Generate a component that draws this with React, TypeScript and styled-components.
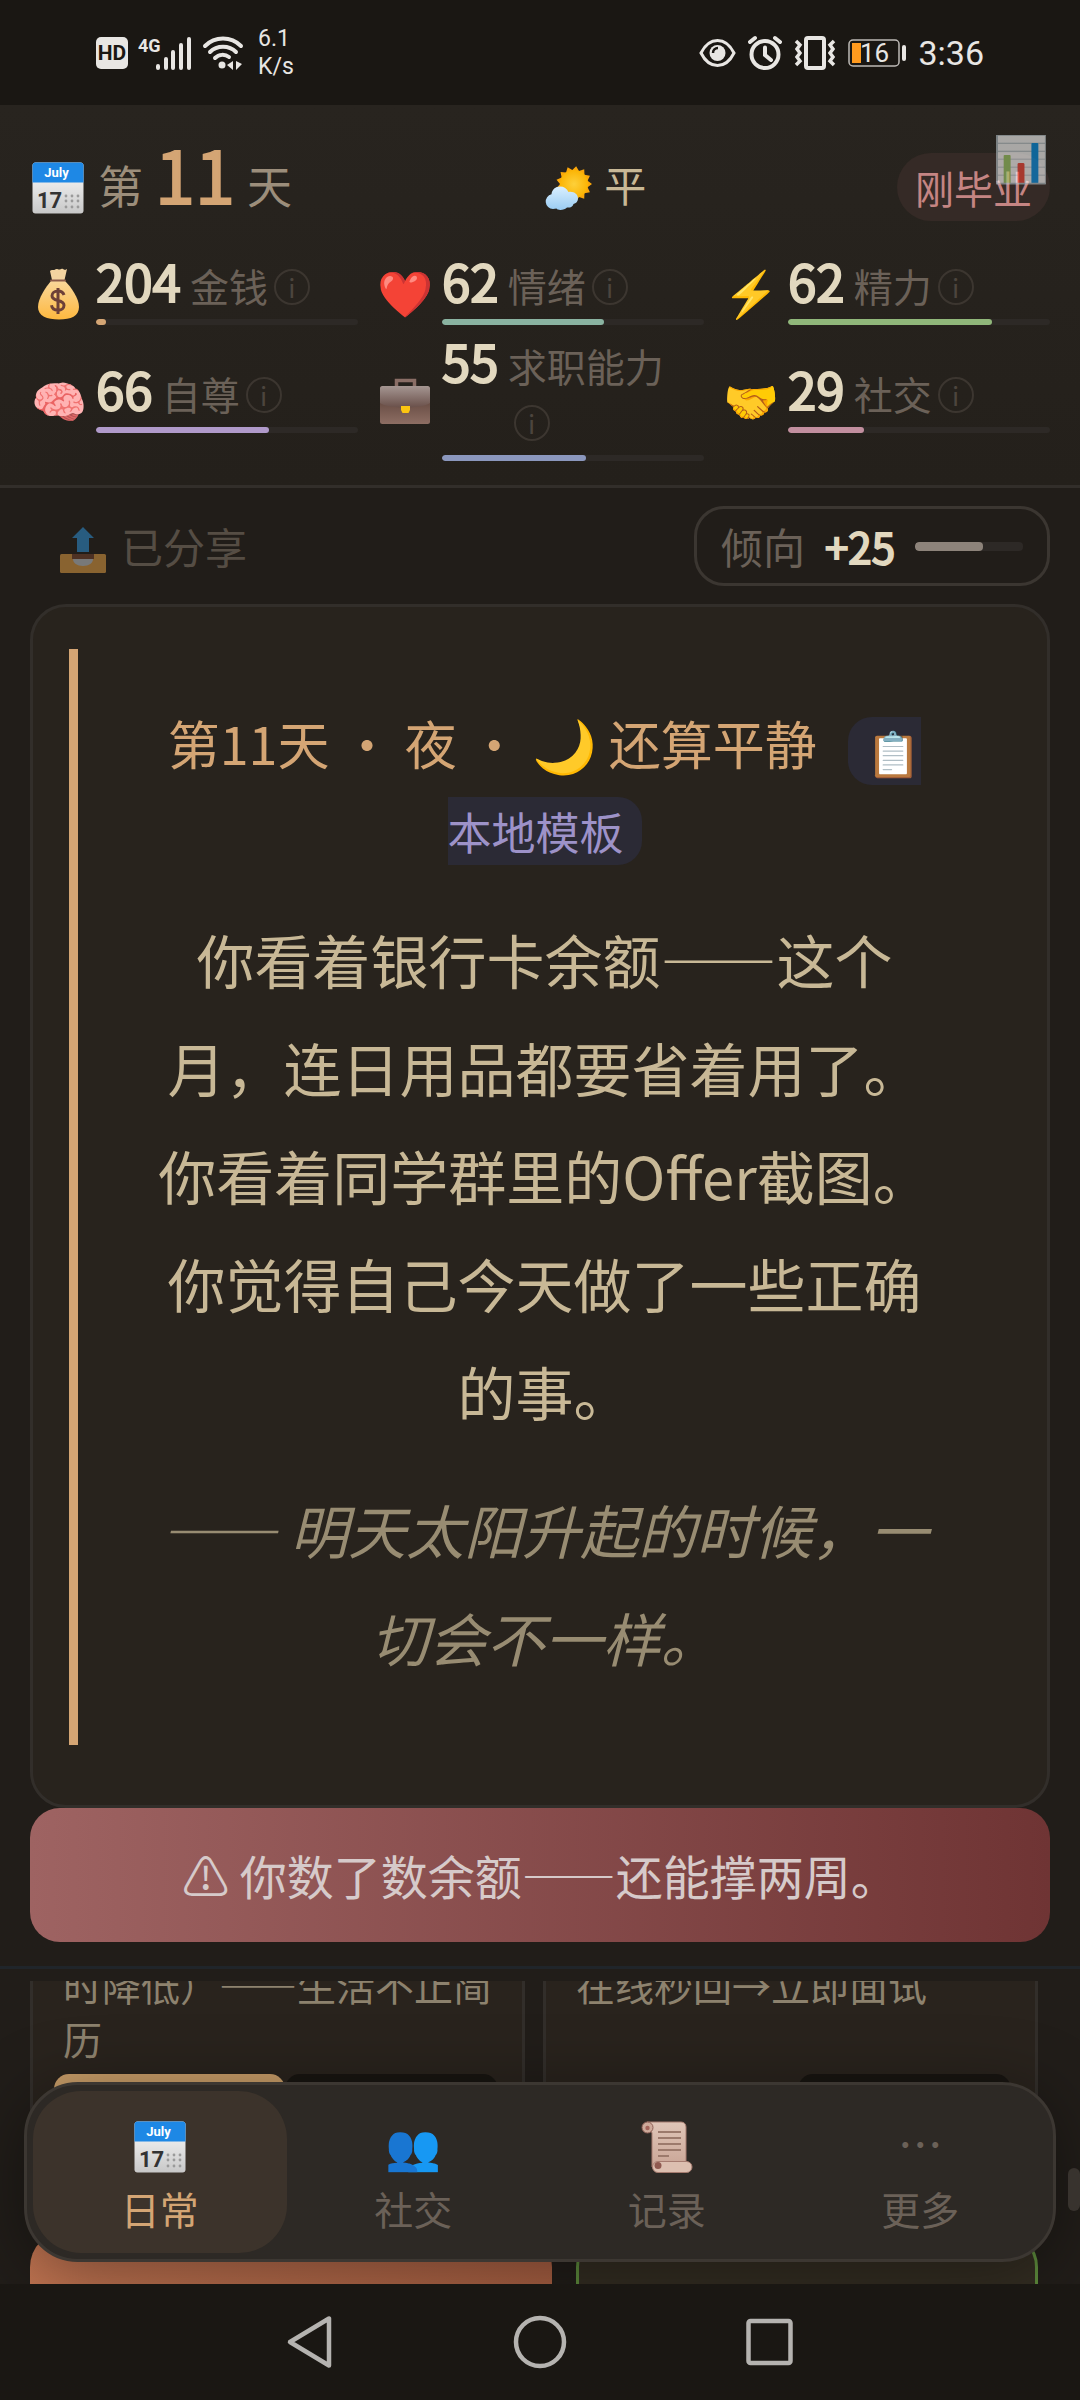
import React, { ReactNode } from 'react';
import styled, { createGlobalStyle } from 'styled-components';

const c = {
  bg: '#211d19',
  system: '#1a1713',
  panel: '#28231d',
  line: '#322e2a',
  gold: '#d4a574',
  text: '#c8b896',
  bright: '#e2d8bf',
  soft: '#9c8e7b',
  muted: '#6b6158',
  white: '#e8e6e3',
};

const GlobalStyle = createGlobalStyle`
  *, *::before, *::after { box-sizing: border-box; }
  body {
    margin: 0;
    background: ${c.bg};
    color: ${c.text};
    font-family: "Noto Sans CJK SC", "Noto Sans", sans-serif;
  }
  button { font: inherit; color: inherit; background: none; border: 0; padding: 0; margin: 0; }
  p, h1, h2 { margin: 0; font-weight: 400; }
`;

const Screen = styled.div`
  display: flex;
  flex-direction: column;
  height: 100vh;
  overflow: hidden;
`;

/* ---------- system status bar ---------- */

const StatusBar = styled.div`
  flex: none;
  height: 105px;
  padding: 0 96px;
  display: flex;
  align-items: center;
  justify-content: space-between;
  background: ${c.system};
  color: ${c.white};
  font-family: Roboto, sans-serif;
`;

const StatusGroup = styled.div<{ $gap: number }>`
  display: flex;
  align-items: center;
  gap: ${p => p.$gap}px;
`;

const HdBadge = styled.span`
  width: 32px;
  height: 32px;
  border-radius: 5px;
  background: ${c.white};
  color: ${c.system};
  font-size: 21px;
  font-weight: 700;
  line-height: 32px;
  text-align: center;
`;

const Speed = styled.span`
  padding-left: 4px;
  font-size: 23px;
  line-height: 28px;
`;

const Clock = styled.span`
  font-size: 34px;
  line-height: 40px;
`;

/* ---------- header ---------- */

const Header = styled.header`
  position: relative;
  flex: none;
  padding: 36px 30px 24px;
  display: flex;
  flex-direction: column;
  gap: 24px;
  background: linear-gradient(#28241f, #24201b);
  border-bottom: 3px solid ${c.line};
`;

const DayRow = styled.div`
  height: 92px;
  display: flex;
  align-items: center;
  justify-content: space-between;
`;

const Day = styled.h1`
  padding-bottom: 9px;
  display: flex;
  align-items: baseline;
  gap: 12px;
  font-size: 45px;
  line-height: 60px;
  color: ${c.soft};
  white-space: nowrap;
`;

const Figure = styled.span<{ $size: number }>`
  font-size: ${p => p.$size}px;
  line-height: 44px;
  -webkit-text-stroke: 2px currentColor;
`;

const DayNumber = styled(Figure)`
  color: ${c.gold};
`;

const Weather = styled.p`
  padding-bottom: 6px;
  font-size: 42px;
  line-height: 60px;
  white-space: nowrap;
`;

const StageTag = styled.span`
  padding: 0 18px;
  border-radius: 34px;
  background: #352a26;
  color: #c58583;
  font-size: 39px;
  line-height: 68px;
`;

const ChartButton = styled.button`
  position: absolute;
  top: 21px;
  right: 31px;
  font-size: 45px;
  line-height: 60px;
  opacity: 0.6;
`;

const Stats = styled.div`
  display: grid;
  grid-template-columns: repeat(3, minmax(0, 1fr));
  gap: 12px 18px;
`;

const Stat = styled.div`
  display: flex;
  align-items: center;
  gap: 9px;
`;

const Icon = styled.span<{ $line?: number }>`
  flex: none;
  width: 57px;
  font-size: 45px;
  line-height: ${p => p.$line ?? 56}px;
  text-align: center;
  white-space: nowrap;
`;

const StatBody = styled.div`
  flex: 1;
  min-width: 0;
`;

const StatLine = styled.div`
  display: flex;
  align-items: baseline;
  gap: 9px;
  color: ${c.bright};
`;

const StatLabel = styled.span`
  font-size: 39px;
  line-height: 56px;
  color: ${c.muted};
`;

const InfoButton = styled.button`
  width: 36px;
  height: 36px;
  margin-left: 6px;
  border: 2px solid #3c3630;
  border-radius: 50%;
  color: #4c453e;
  font-size: 26px;
  line-height: 32px;
  vertical-align: 4px;
`;

const Track = styled.div<{ $h: number; $top?: number }>`
  height: ${p => p.$h}px;
  margin-top: ${p => p.$top ?? 0}px;
  border-radius: 4px;
  background: #2d2926;
  overflow: hidden;
`;

const Fill = styled.div<{ $color: string }>`
  height: 100%;
  border-radius: 4px;
  background: ${p => p.$color};
`;

/* ---------- story ---------- */

const Toolbar = styled.div`
  flex: none;
  padding: 18px 30px;
  display: flex;
  align-items: center;
  justify-content: space-between;
`;

const ShareButton = styled.button`
  padding: 0 27px;
  display: flex;
  align-items: baseline;
  gap: 12px;
  font-size: 42px;
  line-height: 60px;
  color: #8a7e70;
  opacity: 0.5;
`;

const Tendency = styled.div`
  height: 80px;
  padding: 0 24px;
  display: flex;
  align-items: center;
  gap: 20px;
  border: 3px solid #3b3631;
  border-radius: 30px;
  font-size: 42px;
  line-height: 60px;
  color: ${c.muted};
`;

const TendencyValue = styled(Figure)`
  color: ${c.bright};
`;

const TendencyBar = styled.div`
  width: 108px;
`;

const StoryCard = styled.section`
  flex: none;
  margin: 0 30px;
  padding: 42px 36px 60px;
  border: 3px solid ${c.line};
  border-radius: 36px;
  background: ${c.panel};
`;

const StoryBody = styled.div`
  padding: 54px 72px;
  border-left: 9px solid ${c.gold};
  text-align: center;
`;

const StoryTitle = styled.h2`
  margin-bottom: 42px;
  font-size: 52px;
  line-height: 80px;
  color: ${c.gold};
`;

const SourceBadge = styled.span`
  margin-left: 20px;
  padding: 2px 18px;
  border-radius: 24px;
  background: #2b2a35;
  color: #9d92c8;
  font-size: 44px;
  line-height: 60px;
  vertical-align: middle;
`;

const StoryText = styled.p`
  font-size: 58px;
  line-height: 108px;
`;

const StoryQuote = styled(StoryText)`
  margin-top: 30px;
  color: #988c72;
  font-style: italic;
`;

const Alert = styled.div`
  flex: none;
  margin: 0 30px 24px;
  padding: 32px 24px;
  border-radius: 30px;
  background: linear-gradient(90deg, #9e6362, #6f3434);
  color: #d6caca;
  font-size: 47px;
  line-height: 70px;
  text-align: center;
`;

const Divider = styled.hr`
  flex: none;
  width: 100%;
  height: 3px;
  margin: 0 0 12px;
  border: 0;
  background: #20252a;
`;

/* ---------- action list ---------- */

const Actions = styled.main`
  position: relative;
  flex: 1;
  min-height: 0;
  overflow: hidden;
`;

const ActionList = styled.div`
  margin-top: -24px;
  padding: 0 42px 0 30px;
  display: flex;
  flex-direction: column;
  gap: 24px;
`;

const CardGrid = styled.div`
  display: grid;
  grid-template-columns: repeat(2, minmax(0, 1fr));
  gap: 18px;
`;

const ActionCard = styled.article`
  padding: 0 21px 24px;
  border: 3px solid ${c.line};
  border-top: 0;
  border-radius: 0 0 30px 30px;
  background: #29231d;
  display: flex;
  flex-direction: column;
  justify-content: space-between;
  gap: 9px;
`;

const ActionText = styled.p`
  padding: 0 0 0 9px;
  font-size: 39px;
  line-height: 54px;
  color: #8d826e;
`;

const CardButtons = styled.div`
  display: flex;
  justify-content: flex-end;
  padding-right: 3px;
`;

const CardButton = styled.button<{ $gold?: boolean }>`
  flex: ${p => (p.$gold ? '0 0 52%' : '0 0 48%')};
  height: 106px;
  border-radius: 15px;
  background: ${p => (p.$gold ? '#c89d68' : '#181511')};
`;

const WideRow = styled.div`
  display: flex;
  gap: 24px;
`;

const WideButton = styled.button<{ $grow: number; $green?: boolean }>`
  flex: ${p => p.$grow} 1 0;
  height: 120px;
  border-radius: 36px;
  border: 3px solid ${p => (p.$green ? '#5d8a3c' : 'transparent')};
  background: ${p => (p.$green ? '#332d22' : 'linear-gradient(100deg, #c27552, #a85f42) border-box')};
`;

const ScrollThumb = styled.span`
  position: absolute;
  right: 0;
  bottom: 73px;
  width: 12px;
  height: 43px;
  border-radius: 6px;
  background: #38332e;
`;

const TabBar = styled.nav`
  position: absolute;
  left: 24px;
  right: 24px;
  bottom: 22px;
  padding: 6px;
  display: grid;
  grid-template-columns: repeat(4, minmax(0, 1fr));
  border: 3px solid #3c3732;
  border-radius: 54px;
  background: #2d2925;
  box-shadow: 0 12px 72px rgba(0, 0, 0, 0.4);
`;

const Tab = styled.button<{ $active?: boolean }>`
  padding: 17px 0;
  display: flex;
  flex-direction: column;
  align-items: center;
  border-radius: 48px;
  background: ${p => (p.$active ? '#3c332b' : 'transparent')};
  color: ${p => (p.$active ? c.gold : c.muted)};
`;

const TabLabel = styled.span`
  font-size: 39px;
  line-height: 56px;
`;

/* ---------- system navigation ---------- */

const SystemNav = styled.div`
  flex: none;
  height: 116px;
  display: flex;
  align-items: center;
  justify-content: center;
  gap: 174px;
  background: ${c.system};
`;

const SystemButton = styled.button`
  width: 56px;
  height: 56px;
  color: #b5b3b0;
`;

/* ---------- drawings ---------- */

const Picture = styled.svg<{ $size: number }>`
  width: ${p => p.$size}px;
  height: ${p => p.$size}px;
  margin: 0 2px;
  vertical-align: -10px;
`;

const Calendar = () => (
  <Picture $size={52} viewBox="0 0 52 52" aria-hidden="true">
    <defs>
      <linearGradient id="page" x1="0" y1="0" x2="0" y2="1">
        <stop offset="0" stopColor="#fff" />
        <stop offset="1" stopColor="#c8c8c8" />
      </linearGradient>
    </defs>
    <rect x="0.5" y="0.5" width="51" height="51" rx="3" fill="url(#page)" />
    <path d="M0.5 20.5V3.5a3 3 0 0 1 3-3h45a3 3 0 0 1 3 3v17z" fill="#1e88e5" />
    <text x="24.5" y="15" fontFamily="Roboto" fontSize="13" fontWeight="700" fill="#fff" textAnchor="middle">July</text>
    <text x="5" y="46" fontFamily="Roboto" fontSize="22" fontWeight="700" fill="#333">17</text>
    {[34, 40, 46].map(x => [34, 39, 45].map(y => <circle key={`${x}${y}`} cx={x} cy={y} r="1.4" fill="#9a9a9a" />))}
  </Picture>
);

const rays = Array.from({ length: 26 }, (_, i) => {
  const r = i % 2 ? 14 : 18;
  const a = (i / 26) * Math.PI * 2;
  return `${29 + r * Math.cos(a)},${20 + r * Math.sin(a)}`;
}).join(' ');

const SunCloud = () => (
  <Picture $size={48} viewBox="0 0 48 48" aria-hidden="true">
    <defs>
      <radialGradient id="sun">
        <stop offset="0" stopColor="#fdd03a" />
        <stop offset="1" stopColor="#fbb404" />
      </radialGradient>
      <linearGradient id="cloud" x1="0" y1="0" x2="0" y2="1">
        <stop offset="0" stopColor="#d9efff" />
        <stop offset="1" stopColor="#9accf3" />
      </linearGradient>
    </defs>
    <polygon points={rays} fill="#fba70a" />
    <circle cx="29" cy="20" r="14" fill="url(#sun)" />
    <path d="M8 45a7.500 7.500 0 0 1-1.500-14.800C7 25.500 10.500 22.500 15 22.500c4 0 7 2 8.500 5.500 5-1 9.500 2 9.500 6.500 0 3-2 5-4.500 5.500C27.500 43 25 44 22 43.500 20 46 13 47 11.500 44.500z" fill="url(#cloud)" />
  </Picture>
);

const MoneyBag = () => (
  <Picture $size={52} viewBox="0 0 52 52" aria-hidden="true">
    <defs>
      <linearGradient id="bag" x1="0" y1="0" x2="0" y2="1">
        <stop offset="0" stopColor="#f9d79a" />
        <stop offset="1" stopColor="#fdb83f" />
      </linearGradient>
    </defs>
    <path d="M19 12L17 3c2-2 4 0 5-1.500 2-1.500 3 .5 5 0 2-1.500 3-.5 5 .5l2-1-2.500 11z" fill="#f3d3a0" />
    <path d="M18 13h14c6 6 14 17 14 26 0 9-8 12.500-20 12.500S5 48 5 39c0-9 8-20 13-26z" fill="url(#bag)" />
    <path d="M18 12.500h14" stroke="#8a5a4a" strokeWidth="2" strokeLinecap="round" />
    <path d="M31 27c-1-3-3-4-6-4-3.500 0-6 2-6 4.800 0 6.500 12 3 12 9.500 0 3-2.500 5-6 5s-6-2-6.500-5M25 20v26" fill="none" stroke="#6d4038" strokeWidth="3" />
  </Picture>
);

const Briefcase = () => (
  <Picture $size={52} viewBox="0 0 52 52" aria-hidden="true">
    <defs>
      <linearGradient id="leather" x1="0" y1="0" x2="0" y2="1">
        <stop offset="0" stopColor="#4e342e" />
        <stop offset="1" stopColor="#8d6e63" />
      </linearGradient>
      <linearGradient id="flap" x1="0" y1="0" x2="0" y2="1">
        <stop offset="0" stopColor="#a59692" />
        <stop offset="1" stopColor="#6a504a" />
      </linearGradient>
    </defs>
    <path d="M17.500 12V4.500h18V12" fill="none" stroke="#8a6e66" strokeWidth="3.500" />
    <rect x="1" y="10" width="50" height="38" rx="2.500" fill="url(#leather)" />
    <path d="M1 12.500A2.500 2.500 0 0 1 3.500 10h45a2.500 2.500 0 0 1 2.500 2.500V27c-8 6-42 6-50 0z" fill="url(#flap)" />
    <path d="M22 30h9v4l-1.500 3h-6L22 34z" fill="#fbc511" />
  </Picture>
);

const Outbox = () => (
  <Picture $size={48} viewBox="0 0 48 48" aria-hidden="true">
    <path d="M24 1l11 11h-5v14H18V12h-5z" fill="#2f9be6" />
    <rect x="1" y="28" width="46" height="19" rx="1.500" fill="#f0a848" />
    <rect x="13" y="28" width="22" height="5" fill="#7a4630" />
    <path d="M14 33h20c0 4-4 7-10 7s-10-3-10-7z" fill="#cfd4d8" />
  </Picture>
);

const Scroll = () => (
  <Picture $size={52} viewBox="0 0 52 52" aria-hidden="true">
    <defs>
      <linearGradient id="paper" x1="0" y1="0" x2="0" y2="1">
        <stop offset="0" stopColor="#e0c6b8" />
        <stop offset="1" stopColor="#c9a596" />
      </linearGradient>
    </defs>
    <path d="M6 1h34c3 0 5 2 5 5v40H11V12z" fill="url(#paper)" stroke="#a67c70" />
    <circle cx="6.500" cy="6.500" r="5.500" fill="#cdaa9b" stroke="#8f6157" />
    <circle cx="6.500" cy="7" r="2.200" fill="#a3645a" />
    <path d="M17 11h23M17 17h23M17 23h23M17 29h23M17 35h11" stroke="#9c7a6c" strokeWidth="2" />
    <rect x="11.500" y="40.500" width="39.500" height="11" rx="5.500" fill="#dcbfb0" stroke="#a67c70" />
    <circle cx="17" cy="44.500" r="3.500" fill="#8f5a50" />
  </Picture>
);

const Signal = () => (
  <svg width="54" height="36" viewBox="0 0 54 36" fill="none" stroke={c.white} strokeWidth="4" strokeLinecap="round">
    <text x="0" y="17" fontFamily="Roboto" fontSize="18" fontWeight="700" fill={c.white} stroke="none">4G</text>
    <path d="M20 31v2M28 24v9M35 17v16M43 10v23M51 4v29" />
  </svg>
);

const Wifi = () => (
  <svg width="42" height="36" viewBox="0 0 42 36" fill="none" stroke={c.white} strokeWidth="4" strokeLinecap="round">
    <path d="M3 11c10-10 26-10 36 0M8 17c7-7 19-7 26 0M13 23c4-4 10-4 14-1" />
    <circle cx="20" cy="30" r="3.500" fill={c.white} stroke="none" />
    <path d="M31 26v9l-6-5zM34 26v9l6-6z" fill={c.white} stroke="none" />
  </svg>
);

const Eye = () => (
  <svg width="37" height="30" viewBox="0 0 37 30" fill="none" stroke={c.white} strokeWidth="3">
    <path d="M2 15C6 7 12 2.500 18.500 2.500S31 7 35 15c-4 8-10 12.500-16.500 12.500S6 23 2 15z" />
    <circle cx="18.500" cy="15" r="8" fill={c.white} stroke="none" />
    <path d="M14 15c0-3 2-5 5-5" stroke={c.system} strokeWidth="2.500" />
  </svg>
);

const Alarm = () => (
  <svg width="34" height="36" viewBox="0 0 34 36" fill="none" stroke={c.white} strokeWidth="4" strokeLinecap="round">
    <circle cx="17" cy="19.500" r="13.500" />
    <path d="M2 7l5-4M32 7l-5-4M17 12.500v7.500l6 5" />
  </svg>
);

const Vibrate = () => (
  <svg width="42" height="36" viewBox="0 0 42 36" fill="none" stroke={c.white} strokeWidth="4">
    <rect x="12" y="3" width="18" height="30" rx="2" />
    <path d="M2 6l4 4-3 4 3 4-3 4 3 4-4 4M40 6l-4 4 3 4-3 4 3 4-3 4 4 4" strokeWidth="3.500" />
  </svg>
);

const Battery = () => (
  <svg width="58" height="28" viewBox="0 0 58 28" fill="none">
    <rect x="1" y="1" width="50" height="26" rx="4" stroke="#bdbab6" strokeWidth="1.500" />
    <rect x="4" y="4" width="9" height="20" fill="#ff9a1e" />
    <rect x="54" y="6" width="4" height="16" rx="2" fill={c.white} />
    <text x="12" y="23" fontFamily="Roboto" fontSize="26" fill={c.white}>16</text>
  </svg>
);

/* ---------- data ---------- */

type StatData = { icon: ReactNode; value: number; label: string; percent: number; color: string };

const stats: StatData[] = [
  { icon: <MoneyBag />, value: 204, label: '金钱', percent: 4, color: '#d4a574' },
  { icon: '❤️', value: 62, label: '情绪', percent: 62, color: '#8ab3a1' },
  { icon: '⚡', value: 62, label: '精力', percent: 78, color: '#90b77a' },
  { icon: '🧠', value: 66, label: '自尊', percent: 66, color: '#b09aca' },
  { icon: <Briefcase />, value: 55, label: '求职能力', percent: 55, color: '#8b97bd' },
  { icon: '🤝', value: 29, label: '社交', percent: 29, color: '#c28f9f' },
];

const tabs: { icon: ReactNode; label: string }[] = [
  { icon: <Calendar />, label: '日常' },
  { icon: '👥', label: '社交' },
  { icon: <Scroll />, label: '记录' },
  { icon: '⋯', label: '更多' },
];

export default function App() {
  return (
    <Screen lang="zh-CN">
      <GlobalStyle />
      <StatusBar>
        <StatusGroup $gap={10}>
          <HdBadge>HD</HdBadge>
          <Signal />
          <Wifi />
          <Speed>6.1<br />K/s</Speed>
        </StatusGroup>
        <StatusGroup $gap={12}>
          <Eye />
          <Alarm />
          <Vibrate />
          <Battery />
          <Clock>3:36</Clock>
        </StatusGroup>
      </StatusBar>

      <Header>
        <DayRow>
          <Day>
            <span><Calendar /></span>
            <span>第</span>
            <DayNumber $size={72}>11</DayNumber>
            <span>天</span>
          </Day>
          <Weather><SunCloud /> 平</Weather>
          <StageTag>刚毕业</StageTag>
        </DayRow>
        <Stats>
          {stats.map(s => (
            <Stat key={s.label}>
              <Icon>{s.icon}</Icon>
              <StatBody>
                <StatLine>
                  <Figure $size={51}>{s.value}</Figure>
                  <StatLabel>{s.label}<InfoButton type="button">i</InfoButton></StatLabel>
                </StatLine>
                <Track $h={6} $top={6}><Fill $color={s.color} style={{ width: `${s.percent}%` }} /></Track>
              </StatBody>
            </Stat>
          ))}
        </Stats>
        <ChartButton type="button">📊</ChartButton>
      </Header>

      <Toolbar>
        <ShareButton type="button"><span><Outbox /></span><span>已分享</span></ShareButton>
        <Tendency>
          <span>倾向</span>
          <TendencyValue $size={42}>+25</TendencyValue>
          <TendencyBar>
            <Track $h={9}><Fill $color="#8d837a" style={{ width: '63%' }} /></Track>
          </TendencyBar>
        </Tendency>
      </Toolbar>

      <StoryCard>
        <StoryBody>
          <StoryTitle>第11天 · 夜 · 🌙 还算平静 <SourceBadge>📋 本地模板</SourceBadge></StoryTitle>
          <StoryText>你看着银行卡余额——这个月，连日用品都要省着用了。你看着同学群里的Offer截图。你觉得自己今天做了一些正确的事。</StoryText>
          <StoryQuote>—— 明天太阳升起的时候，一切会不一样。</StoryQuote>
        </StoryBody>
      </StoryCard>

      <Alert role="alert">⚠ 你数了数余额——还能撑两周。</Alert>
      <Divider />

      <Actions>
        <ActionList>
          <CardGrid>
            <ActionCard>
              <ActionText>时降低）——生活不止简历</ActionText>
              <CardButtons>
                <CardButton type="button" $gold />
                <CardButton type="button" />
              </CardButtons>
            </ActionCard>
            <ActionCard>
              <ActionText>在线秒回→立即面试</ActionText>
              <CardButtons>
                <CardButton type="button" />
              </CardButtons>
            </ActionCard>
          </CardGrid>
          <WideRow>
            <WideButton type="button" $grow={522} />
            <WideButton type="button" $grow={462} $green />
          </WideRow>
        </ActionList>
        <TabBar>
          {tabs.map((t, i) => (
            <Tab key={t.label} type="button" $active={i === 0}>
              <Icon $line={72}>{t.icon}</Icon>
              <TabLabel>{t.label}</TabLabel>
            </Tab>
          ))}
        </TabBar>
        <ScrollThumb />
      </Actions>

      <SystemNav>
        <SystemButton type="button" aria-label="返回">
          <svg width="56" height="56" viewBox="0 0 56 56" fill="none" stroke="currentColor" strokeWidth="4.500" strokeLinejoin="round">
            <path d="M47 4.500v47L8 28z" />
          </svg>
        </SystemButton>
        <SystemButton type="button" aria-label="主页">
          <svg width="56" height="56" viewBox="0 0 56 56" fill="none" stroke="currentColor" strokeWidth="4.500">
            <circle cx="28" cy="28" r="24" />
          </svg>
        </SystemButton>
        <SystemButton type="button" aria-label="最近任务">
          <svg width="56" height="56" viewBox="0 0 56 56" fill="none" stroke="currentColor" strokeWidth="4.500">
            <rect x="6.500" y="7" width="42" height="42" rx="2" />
          </svg>
        </SystemButton>
      </SystemNav>
    </Screen>
  );
}
